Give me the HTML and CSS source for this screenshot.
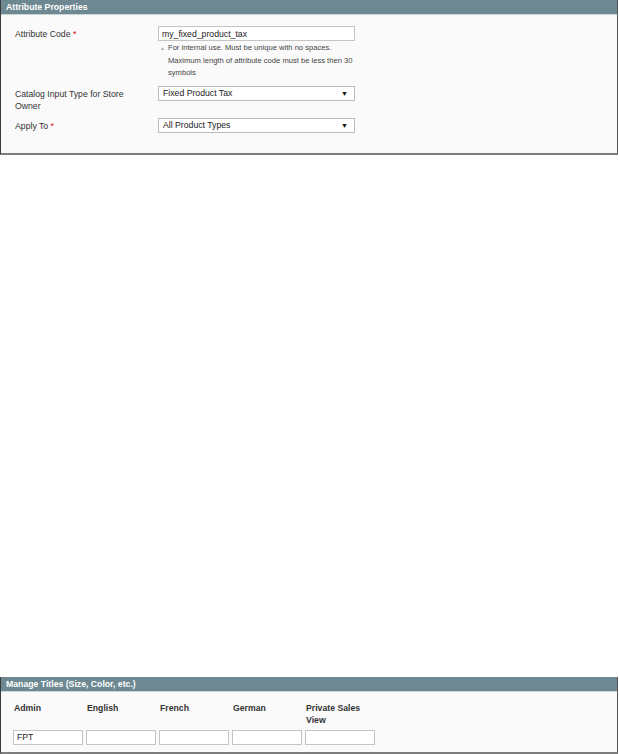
FILE: index.html
```html
<!DOCTYPE html>
<html lang="en">
<head>
  <meta charset="UTF-8" />
  <title>Attribute Properties</title>
  <link rel="stylesheet" href="styles.css">
</head>
<body>

  <div class="fieldset">
    <div class="fieldset-title">Attribute Properties</div>
    <div class="fieldset-body">
      <div class="field">
        <label class="field-label">Attribute Code <span class="req">*</span></label>
        <div class="control">
          <input class="text-input" type="text" value="my_fixed_product_tax" />
          <div class="note">
            <span class="note-arrow">&#9650;</span>
            <p class="note-text">For internal use. Must be unique with no spaces. Maximum length of attribute code must be less then 30 symbols</p>
          </div>
        </div>
      </div>

      <div class="field">
        <label class="field-label">Catalog Input Type for Store Owner</label>
        <div class="control">
          <div class="select">Fixed Product Tax<span class="select-arrow">&#9660;</span></div>
        </div>
      </div>

      <div class="field">
        <label class="field-label">Apply To <span class="req">*</span></label>
        <div class="control">
          <div class="select">All Product Types<span class="select-arrow">&#9660;</span></div>
        </div>
      </div>
    </div>
  </div>

  <div class="fieldset titles">
    <div class="fieldset-title">Manage Titles (Size, Color, etc.)</div>
    <div class="titles-body">
      <div class="titles-grid">
        <div class="col-head">Admin</div>
        <div class="col-head">English</div>
        <div class="col-head">French</div>
        <div class="col-head">German</div>
        <div class="col-head">Private Sales View</div>
        <input class="text-input" type="text" value="FPT" />
        <input class="text-input" type="text" />
        <input class="text-input" type="text" />
        <input class="text-input" type="text" />
        <input class="text-input" type="text" />
      </div>
    </div>
  </div>

</body>
</html>
```

FILE: styles.css
```css
body {
  margin: 0;
  background: #fff;
  font-family: "Liberation Sans", Arial, sans-serif;
  font-size: 8.7px;
  color: #333;
}

.fieldset {
  width: 618px;
  box-sizing: border-box;
  border-left: 1px solid #3a3a3a;
  border-right: 1px solid #555;
  border-bottom: 2px solid #7d7d7d;
  background: #fafafa;
}

.fieldset-title {
  height: 14px;
  line-height: 14px;
  padding-left: 5px;
  background: #6d8891;
  border-bottom: 1px solid #c9d4d7;
  color: #fff;
  font-weight: bold;
}

.fieldset-body {
  padding: 11px 0 20px 0;
}

.field {
  display: flex;
  margin-bottom: 6px;
}

.field:last-child {
  margin-bottom: 0;
}

.field-label {
  width: 118px;
  padding-left: 14px;
  margin-right: 25px;
  padding-top: 2px;
  line-height: 12px;
  color: #333;
}

.req {
  color: #d40707;
}

.control {
  width: 197px;
}

.text-input {
  display: block;
  width: 100%;
  height: 15px;
  box-sizing: border-box;
  margin: 0;
  padding: 0 3px;
  border: 1px solid #c4c4c4;
  background: #fff;
  font-family: "Liberation Sans", Arial, sans-serif;
  font-size: 8.7px;
  color: #222;
}

.note {
  display: flex;
  margin-top: 1px;
  padding-left: 2px;
}

.note-arrow {
  width: 8px;
  flex-shrink: 0;
  font-size: 5px;
  line-height: 12.5px;
  color: #aaa;
}

.note-text {
  margin: 0;
  font-size: 7.6px;
  line-height: 12.5px;
  color: #444;
}

.select {
  position: relative;
  height: 15px;
  line-height: 13px;
  box-sizing: border-box;
  padding-left: 4px;
  border: 1px solid #bcbcbc;
  background: #fff;
  color: #222;
}

.select-arrow {
  position: absolute;
  right: 6px;
  top: 0;
  font-size: 7px;
  color: #111;
}

.titles {
  margin-top: 522px;
}

.titles-body {
  padding: 10px 0 7px 12px;
}

.titles-grid {
  display: grid;
  grid-template-columns: repeat(5, 70px);
  column-gap: 3px;
  row-gap: 4px;
}

.col-head {
  padding-left: 1px;
  width: 60px;
  line-height: 12px;
  font-weight: bold;
  color: #333;
  align-self: start;
}
```
